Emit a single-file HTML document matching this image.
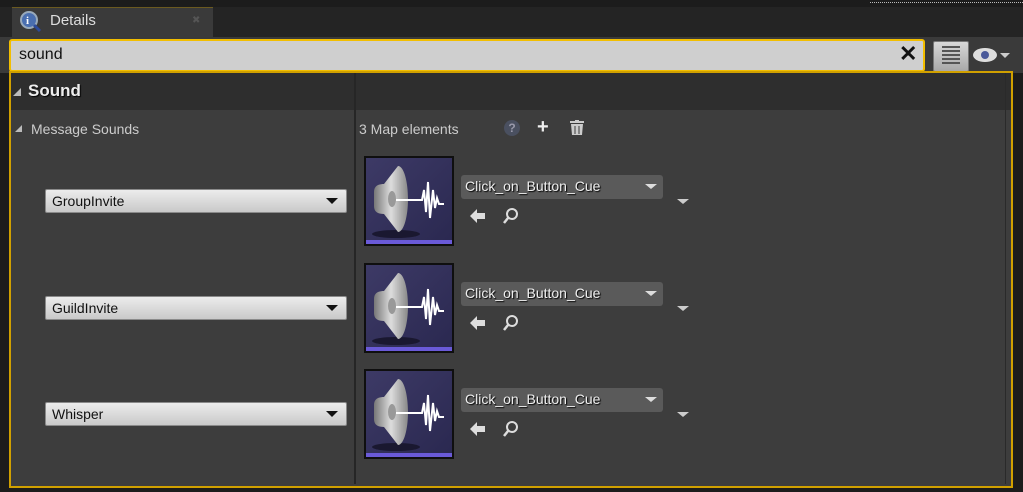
<html><head><style>
body{margin:0;width:1023px;height:492px;background:#1c1c1c;font-family:"Liberation Sans",sans-serif;position:relative;overflow:hidden}
.a{position:absolute}
.combo{position:absolute;left:45px;width:300px;height:22px;background:linear-gradient(#ececec,#c9c9c9);border:1px solid #8a8a8a;border-radius:2px;font-size:14px;color:#111;line-height:22px;text-indent:6px}
.combo:after{content:"";position:absolute;right:8px;top:8px;border-left:6px solid transparent;border-right:6px solid transparent;border-top:6px solid #111}
.thumb{position:absolute;left:364px;width:90px;height:90px;background:#0f0f0f}
.thumb .in{position:absolute;left:2px;top:2px;width:86px;height:86px;background:linear-gradient(135deg,#3d3a66,#2a2850)}
.thumb .bar{position:absolute;left:2px;bottom:2px;width:86px;height:4px;background:#6a5ad8}
.dd{position:absolute;left:461px;width:202px;height:24px;background:#5a5a5a;border-radius:3px;color:#eee;font-size:14px;line-height:22px;text-indent:4px;text-shadow:1px 1px 1px #000}
.dd:after{content:"";position:absolute;right:6px;top:9px;border-left:6px solid transparent;border-right:6px solid transparent;border-top:5px solid #ddd}
.tri{position:absolute;left:677px;border-left:6px solid transparent;border-right:6px solid transparent;border-top:5px solid #ccc}
</style></head><body>
<div class="a" style="left:0;top:7px;width:1023px;height:30px;background:#242424"></div>
<div class="a" style="left:870px;top:0;width:153px;height:2px;border-bottom:1px dotted #bbb"></div>
<div class="a" style="left:12px;top:7px;width:201px;height:30px;background:#3a3a3a;border-top:1px solid #6b5a20"></div>
<svg class="a" style="left:18px;top:9px" width="24" height="24"><circle cx="11" cy="11" r="8" fill="#4a6fb0" stroke="#9ab" stroke-width="2"/><text x="8" y="15" font-size="11" font-weight="bold" fill="#fff" font-family="Liberation Serif">i</text><line x1="16" y1="16" x2="22" y2="22" stroke="#2c4a9a" stroke-width="3"/></svg>
<div class="a" style="left:50px;top:12px;font-size:15px;color:#ddd">Details</div>
<div class="a" style="left:192px;top:15px;font-size:10px;color:#555">✖</div>
<div class="a" style="left:0;top:37px;width:1023px;height:36px;background:#3a3a3a"></div>
<div class="a" style="left:9px;top:39px;width:912px;height:29px;background:#cfcfcf;border:2px solid #f2be00;border-radius:3px"></div>
<div class="a" style="left:19px;top:46px;font-size:16px;color:#111">sound</div>
<div class="a" style="left:899px;top:41px;font-size:22px;color:#111;font-weight:bold">✕</div>
<div class="a" style="left:933px;top:41px;width:34px;height:29px;background:linear-gradient(#d8d8d8,#a8a8a8);border:1px solid #777;border-radius:2px"></div>
<div class="a" style="left:942px;top:46px;width:18px;height:20px;background:repeating-linear-gradient(#555 0 2px,transparent 2px 4px)"></div>
<svg class="a" style="left:971px;top:46px" width="45" height="18"><ellipse cx="14" cy="9" rx="12" ry="7" fill="#ddd"/><circle cx="14" cy="9" r="4" fill="#4b5a9a"/><path d="M29 7h10l-5 5z" fill="#ccc"/></svg>
<div class="a" style="left:9px;top:71px;width:1000px;height:413px;border:2px solid #d0a000;background:#3d3d3d"></div>
<div class="a" style="left:11px;top:73px;width:1000px;height:37px;background:#2e2e2e"></div>
<div class="a" style="left:354px;top:73px;width:2px;height:411px;background:#262626"></div>
<div class="a" style="left:1005px;top:73px;width:1px;height:411px;background:#2a2a2a"></div>
<div class="a" style="left:13px;top:88px;border-left:8px solid transparent;border-bottom:8px solid #bbb"></div>
<div class="a" style="left:28px;top:81px;font-size:17px;font-weight:bold;color:#eee;text-shadow:1px 1px 1px #000">Sound</div>
<div class="a" style="left:15px;top:125px;border-left:7px solid transparent;border-bottom:7px solid #bbb"></div>
<div class="a" style="left:31px;top:121px;font-size:14px;color:#ccc">Message Sounds</div>
<div class="a" style="left:359px;top:121px;font-size:14px;color:#ccc">3 Map elements</div>
<div class="a" style="left:504px;top:120px;width:16px;height:16px;border-radius:50%;background:#4a5060;color:#99a;font-size:12px;text-align:center;line-height:16px;font-weight:bold">?</div>
<div class="a" style="left:537px;top:116px;font-size:20px;font-weight:bold;color:#eee">+</div>
<svg class="a" style="left:570px;top:120px" width="14" height="16"><rect x="0" y="1" width="14" height="2" fill="#ccc"/><rect x="5" y="0" width="4" height="2" fill="#ccc"/><path d="M1 4h12l-1 11H2z" fill="#ccc"/><path d="M5 6v8M9 6v8" stroke="#3d3d3d"/></svg>
<div class="combo" style="top:189px">GroupInvite</div>
<div class="combo" style="top:296px">GuildInvite</div>
<div class="combo" style="top:402px">Whisper</div>
<div class="thumb" style="top:156px"><div class="in"></div><div class="bar"></div></div>
<div class="thumb" style="top:263px"><div class="in"></div><div class="bar"></div></div>
<div class="thumb" style="top:369px"><div class="in"></div><div class="bar"></div></div>
<svg class="a" style="left:366px;top:158px" width="86" height="86"><defs><linearGradient id="g" x1="0" x2="1"><stop offset="0" stop-color="#777"/><stop offset=".5" stop-color="#ddd"/><stop offset="1" stop-color="#888"/></linearGradient><g id="sp"><ellipse cx="30" cy="76" rx="24" ry="4" fill="#1a1830"/><path d="M8 34c0-6 4-8 10-8l14-18c6 0 10 16 10 33s-4 33-10 33L18 56c-6 0-10-2-10-8z" fill="url(#g)"/><ellipse cx="26" cy="41" rx="4" ry="8" fill="#999"/><path d="M30 42h26l2-10 2 22 2-30 2 36 3-28 2 18 2-10 2 6h5" stroke="#fff" stroke-width="2" fill="none"/></g></defs><use href="#sp"/></svg>
<svg class="a" style="left:366px;top:265px" width="86" height="86"><use href="#sp"/></svg>
<svg class="a" style="left:366px;top:371px" width="86" height="86"><use href="#sp"/></svg>
<div class="dd" style="top:175px">Click_on_Button_Cue</div>
<div class="dd" style="top:282px">Click_on_Button_Cue</div>
<div class="dd" style="top:388px">Click_on_Button_Cue</div>
<div class="tri" style="top:199px"></div><div class="tri" style="top:306px"></div><div class="tri" style="top:412px"></div>
<svg class="a" style="left:469px;top:207px" width="54" height="18"><path d="M1 9l7-7v4h8v6H8v4z" fill="#ddd"/><circle cx="43" cy="7" r="5" stroke="#ddd" stroke-width="2" fill="none"/><line x1="39" y1="11" x2="35" y2="16" stroke="#ddd" stroke-width="2.5"/></svg>
<svg class="a" style="left:469px;top:314px" width="54" height="18"><path d="M1 9l7-7v4h8v6H8v4z" fill="#ddd"/><circle cx="43" cy="7" r="5" stroke="#ddd" stroke-width="2" fill="none"/><line x1="39" y1="11" x2="35" y2="16" stroke="#ddd" stroke-width="2.5"/></svg>
<svg class="a" style="left:469px;top:420px" width="54" height="18"><path d="M1 9l7-7v4h8v6H8v4z" fill="#ddd"/><circle cx="43" cy="7" r="5" stroke="#ddd" stroke-width="2" fill="none"/><line x1="39" y1="11" x2="35" y2="16" stroke="#ddd" stroke-width="2.5"/></svg>
</body></html>
